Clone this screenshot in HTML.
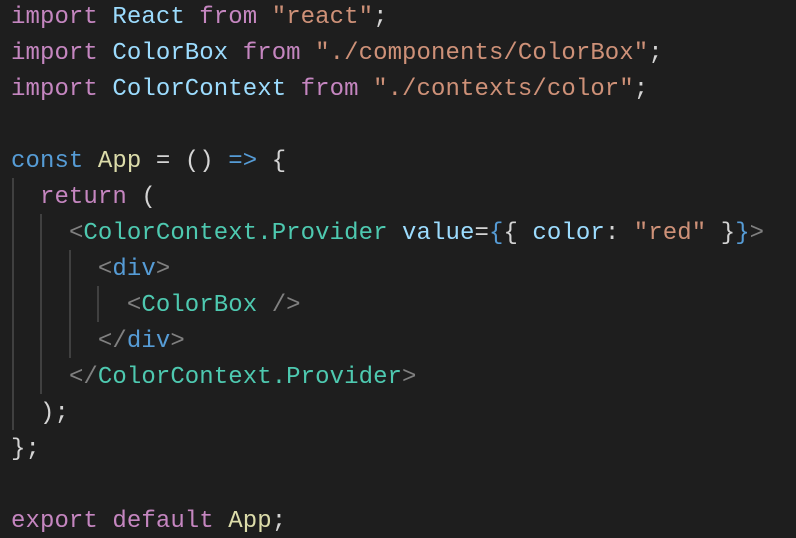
<!DOCTYPE html>
<html><head><meta charset="utf-8"><style>
html,body{margin:0;padding:0;background:#1e1e1e;width:796px;height:538px;overflow:hidden;position:relative}
pre{margin:0;position:absolute;left:11px;top:0px;font-family:"Liberation Mono",monospace;font-size:24px;line-height:36px;color:#d4d4d4;letter-spacing:0.08px;white-space:pre}
.k{color:#c586c0}.v{color:#9cdcfe}.s{color:#ce9178}.b{color:#569cd6}.f{color:#dcdcaa}.t{color:#4ec9b0}.g{color:#808080}
.guide{position:absolute;width:2px;background:#404040}
</style></head><body>
<div class="guide" style="left:12px;top:178px;height:252px"></div>
<div class="guide" style="left:40px;top:214px;height:180px"></div>
<div class="guide" style="left:69px;top:250px;height:108px"></div>
<div class="guide" style="left:97px;top:286px;height:36px"></div>
<pre><span class="k">import</span> <span class="v">React</span> <span class="k">from</span> <span class="s">"react"</span>;
<span class="k">import</span> <span class="v">ColorBox</span> <span class="k">from</span> <span class="s">"./components/ColorBox"</span>;
<span class="k">import</span> <span class="v">ColorContext</span> <span class="k">from</span> <span class="s">"./contexts/color"</span>;

<span class="b">const</span> <span class="f">App</span> = () <span class="b">=&gt;</span> {
  <span class="k">return</span> (
    <span class="g">&lt;</span><span class="t">ColorContext.Provider</span> <span class="v">value</span>=<span class="b">{</span>{ <span class="v">color</span>: <span class="s">"red"</span> }<span class="b">}</span><span class="g">&gt;</span>
      <span class="g">&lt;</span><span class="b">div</span><span class="g">&gt;</span>
        <span class="g">&lt;</span><span class="t">ColorBox</span> <span class="g">/&gt;</span>
      <span class="g">&lt;/</span><span class="b">div</span><span class="g">&gt;</span>
    <span class="g">&lt;/</span><span class="t">ColorContext.Provider</span><span class="g">&gt;</span>
  );
};

<span class="k">export</span> <span class="k">default</span> <span class="f">App</span>;</pre>
</body></html>
